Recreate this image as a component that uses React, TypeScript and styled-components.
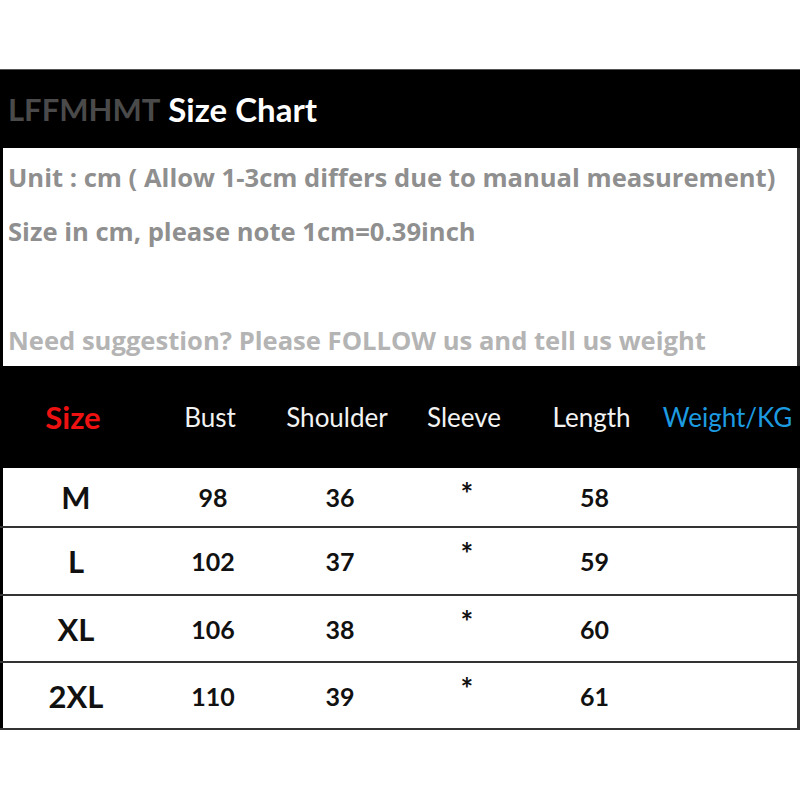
import styled, { createGlobalStyle } from "styled-components";

const GlobalStyle = createGlobalStyle`
  body {
    margin: 0;
    background: #ffffff;
    font-family: Lato, "Liberation Sans", sans-serif;
  }
`;

const Chart = styled.div`
  width: 800px;
  margin-top: 69px;
  display: flex;
  flex-direction: column;
`;

const TitleBar = styled.div`
  height: 79px;
  background: #000;
  border-top: 1px solid #555;
  box-sizing: border-box;
  display: flex;
  align-items: center;
  padding-left: 8px;
  font-size: 33px;
  font-weight: 700;
  gap: 8px;
`;

const Brand = styled.span`
  color: #4a4a4a;
  font-size: 31px;
`;

const TitleText = styled.span`
  color: #ffffff;
`;

const Notes = styled.div`
  height: 218px;
  box-sizing: border-box;
  border-left: 3px solid #000;
  border-right: 3px solid #333;
  padding: 12px 0 0 5px;
  display: flex;
  flex-direction: column;
`;

const Note = styled.div<{ $light?: boolean; $push?: number }>`
  font-family: "Open Sans", sans-serif;
  font-size: 25.6px;
  font-weight: 700;
  color: ${(p) => (p.$light ? "#b4b4b4" : "#8f8f8f")};
  height: 36px;
  line-height: 36px;
  margin-top: ${(p) => p.$push ?? 0}px;
  white-space: nowrap;
`;

const Grid = styled.div`
  display: grid;
  grid-template-columns: 146px 128px 126px 128px 127px 145px;
`;

const HeadRow = styled(Grid)`
  height: 102px;
  background: #000;
  align-items: center;
`;

const HeadCell = styled.div<{ $color?: string; $bold?: boolean }>`
  text-align: center;
  font-size: ${(p) => (p.$bold ? 31 : 26)}px;
  font-weight: ${(p) => (p.$bold ? 700 : 400)};
  color: ${(p) => p.$color ?? "#f2f2f2"};
  white-space: nowrap;
`;

const Body = styled.div`
  border-left: 3px solid #000;
  border-right: 3px solid #333;
  display: flex;
  flex-direction: column;
`;

const Row = styled(Grid)<{ $h: number }>`
  height: ${(p) => p.$h}px;
  box-sizing: border-box;
  border-bottom: 2px solid #333;
  align-items: center;
  margin: 0 -3px;
  padding: 0 3px;
`;

const Cell = styled.div<{ $big?: boolean; $star?: boolean }>`
  text-align: center;
  font-weight: 700;
  font-size: ${(p) => (p.$big ? 31 : 25)}px;
  color: #111;
  ${(p) => p.$star && "align-self: start; padding-top: 10px; font-size: 30px; line-height: 30px;"}
`;

const rows = [
  { size: "M", bust: 98, shoulder: 36, length: 58, h: 60 },
  { size: "L", bust: 102, shoulder: 37, length: 59, h: 68 },
  { size: "XL", bust: 106, shoulder: 38, length: 60, h: 67 },
  { size: "2XL", bust: 110, shoulder: 39, length: 61, h: 67 },
];

export default function App() {
  return (
    <Chart>
      <GlobalStyle />
      <TitleBar>
        <Brand>LFFMHMT</Brand>
        <TitleText>Size Chart</TitleText>
      </TitleBar>
      <Notes>
        <Note>Unit : cm ( Allow 1-3cm differs due to manual measurement)</Note>
        <Note $push={18}>Size in cm, please note 1cm=0.39inch</Note>
        <Note $light $push={73}>Need suggestion? Please FOLLOW us and tell us weight</Note>
      </Notes>
      <HeadRow>
        <HeadCell $color="#ee1111" $bold>Size</HeadCell>
        <HeadCell>Bust</HeadCell>
        <HeadCell>Shoulder</HeadCell>
        <HeadCell>Sleeve</HeadCell>
        <HeadCell>Length</HeadCell>
        <HeadCell $color="#1d9be0">Weight/KG</HeadCell>
      </HeadRow>
      <Body>
        {rows.map((r) => (
          <Row key={r.size} $h={r.h}>
            <Cell $big>{r.size}</Cell>
            <Cell>{r.bust}</Cell>
            <Cell>{r.shoulder}</Cell>
            <Cell $star>*</Cell>
            <Cell>{r.length}</Cell>
            <Cell></Cell>
          </Row>
        ))}
      </Body>
    </Chart>
  );
}
